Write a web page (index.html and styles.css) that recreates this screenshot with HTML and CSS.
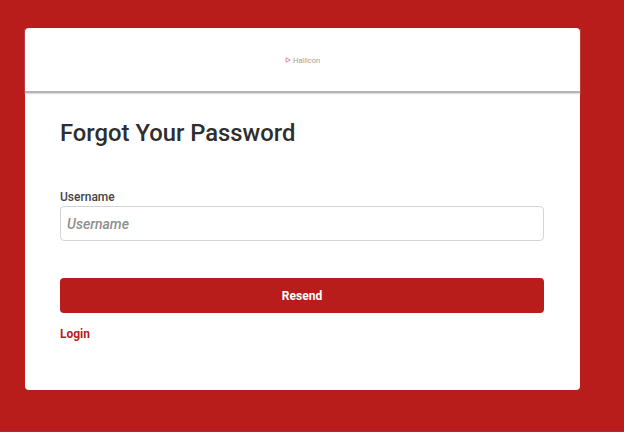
FILE: index.html
```html
<!DOCTYPE html>
<html>
<head>
    <meta charset="utf-8">
    <title>Forgot Your Password</title>
    <link rel="stylesheet" href="styles.css">
</head>
<body>
    <div class="backdrop">
        <div class="card">
            <div class="card-header">
                <div class="logo">
                    <svg class="logo-icon" width="6" height="6" viewBox="0 0 6 6"><path d="M1 .8 5.2 3 1 5.2z" fill="none" stroke="#e58a9c" stroke-width="1"/></svg>
                    <span class="logo-text">Hallicon</span>
                </div>
            </div>
            <div class="card-body">
                <h1>Forgot Your Password</h1>
                <label class="field-label" for="username">Username</label>
                <input class="field-input" id="username" type="text" placeholder="Username">
                <button class="btn-resend">Resend</button>
                <a class="login-link" href="#">Login</a>
            </div>
        </div>
    </div>
</body>
</html>
```

FILE: styles.css
```css
* {
    box-sizing: border-box;
}

html, body {
    margin: 0;
    height: 100%;
    background: #fff;
    overflow: hidden;
}

body {
    font-family: Roboto, "Liberation Sans", sans-serif;
}

.backdrop {
    height: 432px;
    padding: 28px 44px 0 25px;
    background: #b81c1b;
    border-bottom: 1px solid #8f3a3a;
}

.card {
    height: 362px;
    background: #fff;
    border-radius: 4px;
}

.card-header {
    height: 65px;
    display: flex;
    align-items: center;
    justify-content: center;
    border-bottom: 2px solid #b5b5b5;
    box-shadow: 0 1px 1px #ddd;
}

.logo {
    display: flex;
    align-items: center;
    gap: 2px;
    margin-top: 1px;
}

.logo-text {
    font-size: 7.5px;
    color: #a0a0a0;
}

.card-body {
    padding: 24px 36px 0 35px;
}

h1 {
    margin: 0 0 41px;
    font-size: 23.8px;
    line-height: 32px;
    font-weight: 500;
    color: #2e2e2e;
}

.field-label {
    display: block;
    font-size: 12px;
    line-height: 15px;
    font-weight: 500;
    color: #444;
    margin-bottom: 1px;
}

.field-input {
    display: block;
    width: 100%;
    height: 35px;
    padding: 0 6px;
    border: 1px solid #d4d4d4;
    border-radius: 4px;
    font-family: inherit;
    font-size: 14px;
    font-weight: 500;
    font-style: italic;
    background: #fff;
}

.field-input::placeholder {
    color: #8f8f8f;
    opacity: 1;
}

.btn-resend {
    display: block;
    width: 100%;
    height: 35px;
    margin-top: 37px;
    border: none;
    border-radius: 4px;
    background: #b81c1b;
    color: #fff;
    font-family: inherit;
    font-size: 12px;
    font-weight: 700;
}

.login-link {
    display: inline-block;
    margin-top: 13px;
    font-size: 12px;
    line-height: 16px;
    font-weight: 700;
    color: #b81c1b;
    text-decoration: none;
}
```
